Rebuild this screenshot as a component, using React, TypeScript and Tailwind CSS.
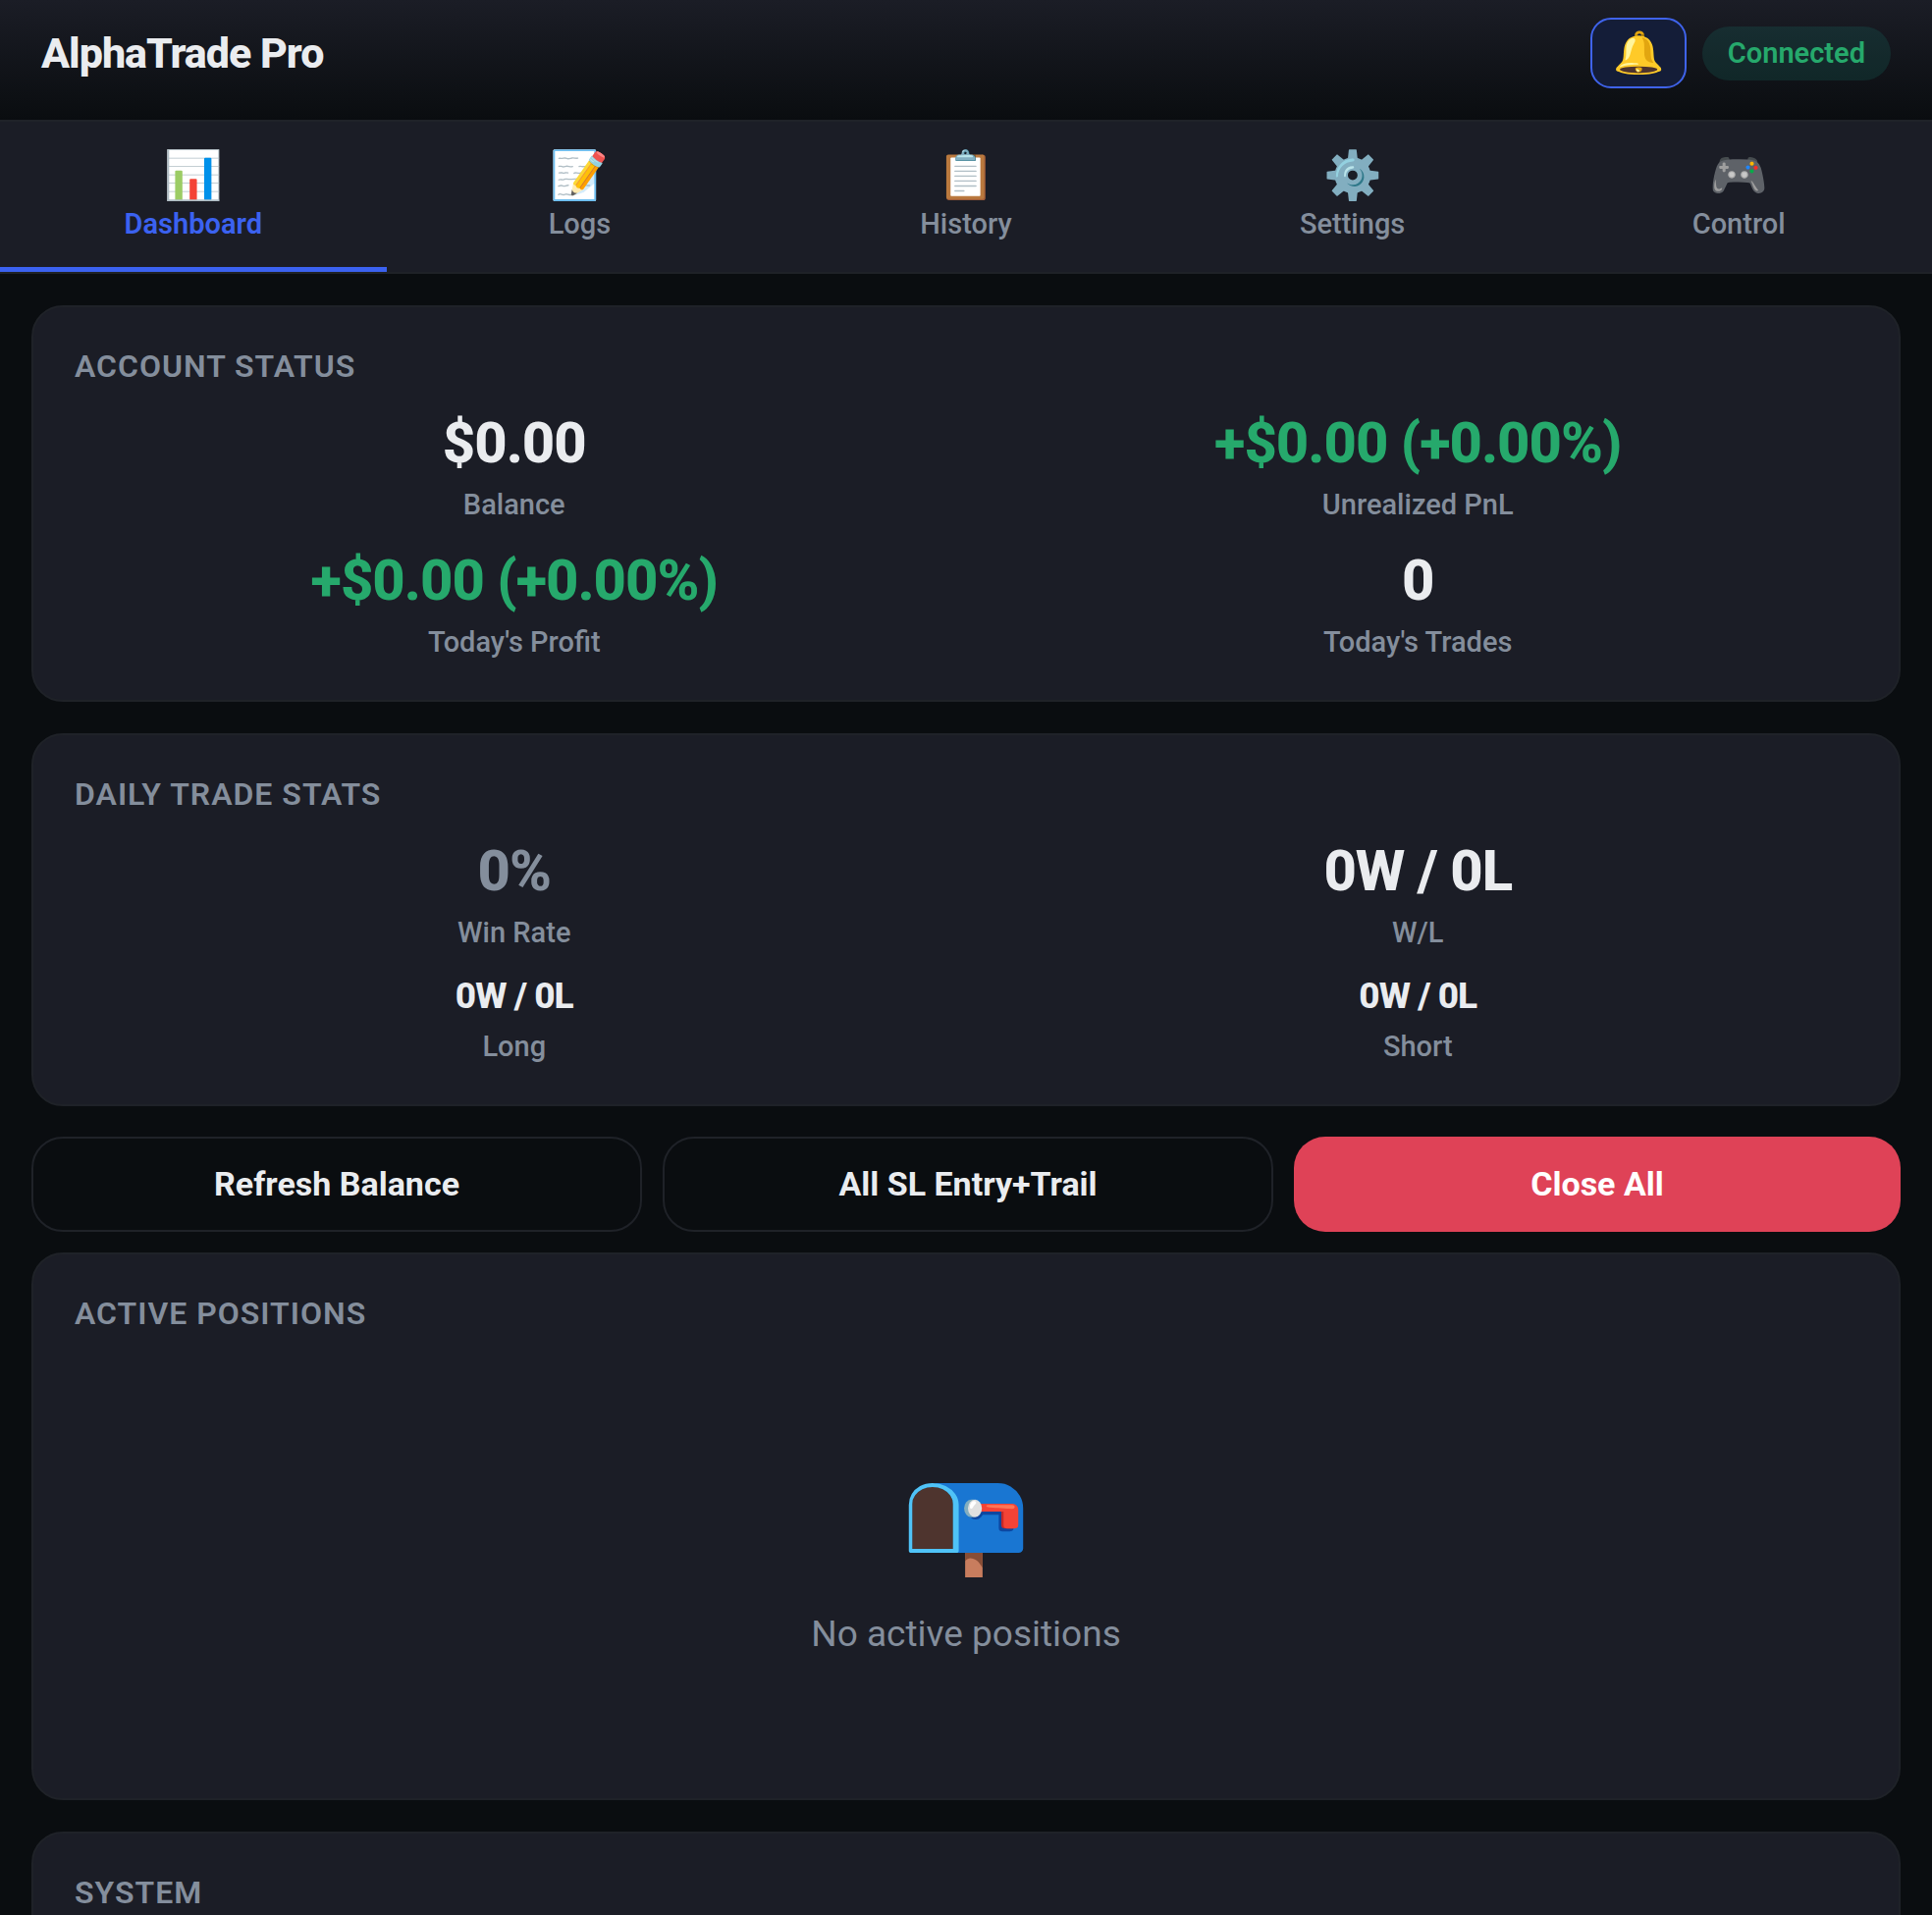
const TABS = [
    { name: "Dashboard", icon: "📊" },
    { name: "Logs", icon: "📝" },
    { name: "History", icon: "📋" },
    { name: "Settings", icon: "⚙️" },
    { name: "Control", icon: "🎮" },
];

const ACCOUNT = [
    { label: "Balance", value: "$0.00", color: "text-[#eaecef]" },
    { label: "Unrealized PnL", value: "+$0.00 (+0.00%)", color: "text-[#26a96c]" },
    { label: "Today's Profit", value: "+$0.00 (+0.00%)", color: "text-[#26a96c]" },
    { label: "Today's Trades", value: "0", color: "text-[#eaecef]" },
];

const DAILY = [
    { label: "Win Rate", value: "0%", color: "text-[#848e9c]" },
    { label: "W/L", value: "0W / 0L", color: "text-[#eaecef]" },
    { label: "Long", value: "0W / 0L", color: "text-[#eaecef]", small: true },
    { label: "Short", value: "0W / 0L", color: "text-[#eaecef]", small: true },
];

type Stat = { label: string; value: string; color: string; small?: boolean };

const Card = ({ title, children }: { title: string; children?: React.ReactNode }) => (
    <section className="rounded-[32px] border-2 border-[#1f2228] bg-[#1b1d26] p-[42px]">
        <h2 className="mb-[25px] text-[32px] leading-[36px] font-semibold uppercase tracking-[1px] text-[#848e9c]">
            {title}
        </h2>
        {children}
    </section>
);

const StatGrid = ({ stats }: { stats: Stat[] }) => (
    <div className="grid grid-cols-2 gap-[25px]">
        {stats.map((stat) => (
            <div key={stat.label} className="text-center">
                <div
                    className={`font-extrabold tracking-[-1px] ${stat.color} ${
                        stat.small ? "text-[37px] leading-[46px]" : "text-[58px] leading-[70px]"
                    }`}
                >
                    {stat.value}
                </div>
                <div className="mt-[11px] text-[29px] leading-[34px] font-medium text-[#848e9c]">{stat.label}</div>
            </div>
        ))}
    </div>
);

const App = () => {
    return (
        <div className="min-h-screen bg-[#0a0d10] font-[Roboto,sans-serif] text-[#eaecef]">
            {/* Header */}
            <header className="flex items-center justify-between border-b-2 border-[#1f2228] bg-linear-to-b from-[#1b1d26] to-[#0a0d10] px-[42px] pt-[18px] pb-8">
                <h1 className="text-[43px] leading-[50px] font-extrabold tracking-[-1px]">AlphaTrade Pro</h1>
                <div className="flex items-center gap-4">
                    <button
                        type="button"
                        aria-label="Notifications"
                        className="rounded-[21px] border-2 border-[#3f63ea] bg-[#141d38] px-[21px] py-[9px] text-[42px] leading-[50px]"
                    >
                        🔔
                    </button>
                    <span className="rounded-full bg-[#1aa08c]/15 px-[26px] py-[10px] text-[29px] leading-[35px] font-semibold text-[#26a96c]">
                        Connected
                    </span>
                </div>
            </header>

            {/* Tabs */}
            <nav className="grid grid-cols-5 border-b-2 border-[#1f2228] bg-[#1b1d26]">
                {TABS.map((tab, index) => (
                    <button
                        key={tab.name}
                        type="button"
                        className={`flex flex-col items-center gap-1 border-b-[5px] py-[27px] text-[29px] leading-[34px] ${
                            index === 0
                                ? "border-[#3b62f0] font-semibold text-[#3b62f0]"
                                : "border-transparent font-medium text-[#848e9c]"
                        }`}
                    >
                        <span className="text-[48px] leading-[56px]">{tab.icon}</span>
                        {tab.name}
                    </button>
                ))}
            </nav>

            <main className="px-8 pt-8">
                <div className="flex flex-col gap-8">
                    <Card title="Account Status">
                        <StatGrid stats={ACCOUNT} />
                    </Card>
                    <Card title="Daily Trade Stats">
                        <StatGrid stats={DAILY} />
                    </Card>
                </div>

                {/* Quick actions */}
                <div className="mt-[31px] mb-[21px] flex gap-[21px] text-[34px] leading-[41px] font-bold">
                    <button type="button" className="flex-1 rounded-[32px] border-2 border-[#1f2228] py-[26px]">
                        Refresh Balance
                    </button>
                    <button type="button" className="flex-1 rounded-[32px] border-2 border-[#1f2228] py-[26px]">
                        All SL Entry+Trail
                    </button>
                    <button type="button" className="flex-1 rounded-[32px] bg-[#df4257] py-[26px] text-white">
                        Close All
                    </button>
                </div>

                <div className="flex flex-col gap-8">
                    <Card title="Active Positions">
                        <div className="pt-[106px] pb-[103px] text-center">
                            <div className="mb-8 text-[106px] leading-[124px]">📭</div>
                            <p className="text-[37px] leading-[44px] text-[#848e9c]">No active positions</p>
                        </div>
                    </Card>
                    <Card title="System" />
                </div>
            </main>
        </div>
    );
};

export default App;
